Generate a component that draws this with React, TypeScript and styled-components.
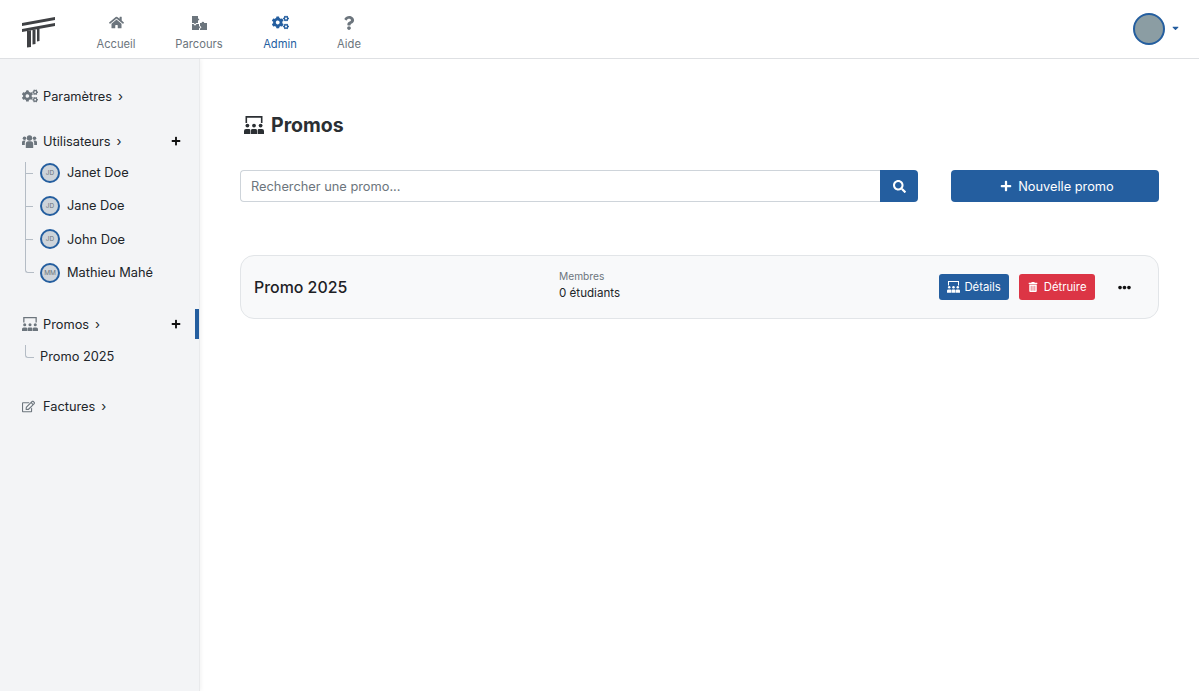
import React, { FC } from 'react';
import styled, { createGlobalStyle } from 'styled-components';
import {
  FaCaretDown,
  FaCogs,
  FaEllipsisH,
  FaHome,
  FaPlus,
  FaQuestion,
  FaRegEdit,
  FaSearch,
  FaTrashAlt,
} from 'react-icons/fa';

const BLUE = '#245e9f';
const GREY = '#6c757d';
const DARK = '#212529';
const LINE = '#b4bcc5';

const GlobalStyle = createGlobalStyle`
  html, body { margin: 0; padding: 0; height: 100%; background: #fff; }
  body { font-family: Inter, "Liberation Sans", sans-serif; color: ${DARK}; overflow: hidden; }
  * { box-sizing: border-box; }
`;

const Page = styled.div`
  display: flex;
  flex-direction: column;
  height: 691px;
`;

const Header = styled.header`
  height: 59px;
  flex: none;
  display: flex;
  align-items: flex-start;
  border-bottom: 1px solid #dee0e3;
  background: #fff;
  position: relative;
  z-index: 2;
`;

const LogoWrap = styled.div`
  width: 76px;
  padding: 17px 0 0 22px;
  flex: none;
  svg { display: block; }
`;

const Nav = styled.nav`
  display: flex;
`;

const NavIcon = styled.span`
  height: 15px;
  margin-bottom: 6px;
  display: flex;
  align-items: center;
  justify-content: center;
`;

const NavItem = styled.a<{ $active?: boolean; $width: number }>`
  width: ${(p) => p.$width}px;
  display: flex;
  flex-direction: column;
  align-items: center;
  padding-top: 15px;
  font-size: 11.2px;
  line-height: 16px;
  color: ${(p) => (p.$active ? BLUE : GREY)};
`;

const UserMenu = styled.div`
  margin-left: auto;
  display: flex;
  align-items: center;
  padding: 13px 19px 0 0;
  color: ${BLUE};
  svg { margin-left: 6px; width: 9px; height: 10px; margin-top: -3px; }
`;

const UserPhoto = styled.div`
  width: 32px;
  height: 32px;
  border-radius: 50%;
  background: #8b9da3;
  border: 2px solid ${BLUE};
`;

const Body = styled.div`
  flex: 1;
  display: flex;
  min-height: 0;
`;

const Sidebar = styled.aside`
  width: 200px;
  flex: none;
  background: #f3f4f6;
  border-right: 1px solid #e9eaec;
  box-shadow: 1px 0 4px rgba(0, 0, 0, 0.06);
  padding-top: 25px;
`;

const Section = styled.section<{ $gap: number }>`
  margin-bottom: ${(p) => p.$gap}px;
`;

const SectionTitle = styled.div<{ $active?: boolean }>`
  position: relative;
  height: 24px;
  display: flex;
  align-items: center;
  padding: 0 18px 0 22px;
  font-size: 12.8px;
  color: ${DARK};
  ${(p) =>
    p.$active &&
    `&::after {
      content: '';
      position: absolute;
      right: 0;
      top: -3px;
      width: 4px;
      height: 30px;
      background: ${BLUE};
    }`}
`;

const SectionIcon = styled.span`
  width: 21px;
  flex: none;
  display: flex;
  align-items: center;
  color: ${GREY};
  svg { display: block; }
`;

const Chevron = styled.span`
  margin-left: 6px;
  font-size: 13px;
`;

const AddButton = styled.span`
  margin-left: auto;
  display: flex;
  color: #111;
  svg { width: 10px; height: 10px; }
`;

const Tree = styled.ul<{ $offset: number }>`
  list-style: none;
  margin: ${(p) => p.$offset}px 0 0;
  padding: 0 0 0 40px;
`;

const Leaf = styled.li<{ $first?: boolean; $last?: boolean }>`
  position: relative;
  height: 33.3px;
  display: flex;
  align-items: center;
  gap: 7px;
  font-size: 12.8px;
  &::before {
    content: '';
    position: absolute;
    left: -15px;
    top: ${(p) => (p.$first ? '6px' : '0')};
    bottom: ${(p) => (p.$last ? '50%' : '0')};
    width: 8px;
    border-left: 1.5px solid ${LINE};
    ${(p) =>
      p.$last &&
      `border-bottom: 1.5px solid ${LINE};
       border-bottom-left-radius: 3px;`}
  }
  &::after {
    content: '';
    position: absolute;
    left: -15px;
    top: 50%;
    width: 8px;
    border-bottom: 1.5px solid ${(p) => (p.$last ? 'transparent' : LINE)};
  }
`;

const PromoLeaf = styled.li`
  position: relative;
  height: 29px;
  display: flex;
  align-items: center;
  font-size: 12.8px;
  &::before {
    content: '';
    position: absolute;
    left: -15px;
    top: 3px;
    width: 8px;
    height: 12px;
    border-left: 1.5px solid ${LINE};
    border-bottom: 1.5px solid ${LINE};
    border-bottom-left-radius: 3px;
  }
`;

const Avatar = styled.span`
  width: 20px;
  height: 20px;
  flex: none;
  border-radius: 50%;
  border: 2px solid ${BLUE};
  background: #ced4da;
  color: ${GREY};
  font-size: 6.5px;
  display: flex;
  align-items: center;
  justify-content: center;
`;

const Main = styled.main`
  flex: 1;
  padding: 53px 40px 0 40px;
`;

const Title = styled.h1`
  margin: 0 0 33px 4px;
  height: 25px;
  display: flex;
  align-items: center;
  gap: 7px;
  font-size: 19.5px;
  font-weight: 700;
  color: #2b2f33;
`;

const Toolbar = styled.div`
  display: flex;
  align-items: stretch;
  height: 32px;
  margin-bottom: 53px;
`;

const SearchGroup = styled.div`
  width: 678px;
  display: flex;
`;

const SearchInput = styled.input`
  flex: 1;
  min-width: 0;
  border: 1px solid #ced4da;
  border-right: none;
  border-radius: 4px 0 0 4px;
  padding: 0 10px;
  font: 12.8px Inter, "Liberation Sans", sans-serif;
  outline: none;
  &::placeholder { color: ${GREY}; opacity: 1; }
`;

const SearchButton = styled.button`
  width: 38px;
  border: none;
  background: ${BLUE};
  color: #fff;
  border-radius: 0 4px 4px 0;
  display: flex;
  align-items: center;
  justify-content: center;
  svg { width: 13px; height: 13px; }
`;

const NewButton = styled.button`
  margin-left: auto;
  width: 208px;
  padding: 0 0 0 4px;
  border: none;
  border-radius: 4px;
  background: ${BLUE};
  color: #fff;
  font: 12.8px Inter, "Liberation Sans", sans-serif;
  display: flex;
  align-items: center;
  justify-content: center;
  gap: 6px;
  svg { width: 12px; height: 12px; }
`;

const Card = styled.article`
  height: 64px;
  display: flex;
  align-items: center;
  border: 1px solid #e2e5e8;
  border-radius: 14px;
  background: #f8f9fa;
  padding: 0 27px 0 13px;
`;

const CardName = styled.div`
  width: 305px;
  font-size: 15.9px;
  font-weight: 500;
  color: #1d2125;
`;

const Stat = styled.div`
  margin-top: -5px;
  font-size: 11.6px;
  line-height: 16px;
`;

const StatLabel = styled.div`
  margin-bottom: 1px;
  font-size: 10.2px;
  color: ${GREY};
`;

const CardActions = styled.div`
  margin-left: auto;
  display: flex;
  align-items: center;
`;

const ActionButton = styled.button<{ $danger?: boolean; $gap: number }>`
  height: 26px;
  padding: 0 8.5px;
  border: none;
  border-radius: 3px;
  margin-right: 10px;
  background: ${(p) => (p.$danger ? '#dc3545' : BLUE)};
  color: #fff;
  font: 11.3px Inter, "Liberation Sans", sans-serif;
  display: flex;
  align-items: center;
  gap: ${(p) => p.$gap}px;
`;

const MoreButton = styled.span`
  display: flex;
  margin-left: 13px;
  color: #111;
  svg { width: 13px; height: 13px; }
`;

const Logo: FC = () => (
  <svg width="33" height="31" viewBox="0 0 33 31">
    <g fill="#3f4144">
      <polygon points="0,6 33,0 33,3 0,9" />
      <polygon points="0,12 33,6 33,9 0,15" />
      <polygon points="5,14 9,13.3 9,30 5,30.6" />
      <polygon points="10.5,13 13.5,12.4 13.5,27 10.5,27.5" />
      <polygon points="15,12 17.5,11.5 17.5,24 15,24.4" />
    </g>
  </svg>
);

const PromoIcon: FC<{ size: number }> = ({ size }) => (
  <svg width={size} height={size * 0.9} viewBox="0 0 20 18" fill="currentColor">
    <path d="M1.5 0h17v7h-1.6V1.7H3.1V7H1.5z" />
    <circle cx="3.4" cy="9.6" r="1.9" />
    <circle cx="10" cy="9.6" r="1.9" />
    <circle cx="16.6" cy="9.6" r="1.9" />
    <path d="M0 18v-3a2 2 0 0 1 2-2h3a1.4 1.4 0 0 1 1.4 1.4V18zM7 18v-3.6A1.4 1.4 0 0 1 8.400 13h3.2a1.4 1.4 0 0 1 1.4 1.4V18zM13.600 18v-3.600A1.4 1.4 0 0 1 15 13h3a2 2 0 0 1 2 2v3z" />
  </svg>
);

const ParcoursIcon: FC = () => (
  <svg width="15" height="14" viewBox="0 0 15 14" fill="currentColor">
    <path d="M0 0h6v2.2L7.400 3.500 6 4.800V7H4.200L3 8.300 1.800 7H0z" />
    <path d="M0 8h1.400L3 9.700 4.600 8H7v2l1.300 1.200L7 12.400V14H0z" />
    <path d="M8 7h1.600a1.300 1.300 0 1 1 2.600 0H15v7H8v-1.300l1.500-1.500L8 9.700z" />
  </svg>
);

const UsersIcon: FC = () => (
  <svg width="15" height="13" viewBox="0 0 15 13" fill="currentColor">
    <circle cx="7.500" cy="3" r="2.700" />
    <circle cx="2.500" cy="3.200" r="1.800" />
    <circle cx="12.500" cy="3.200" r="1.800" />
    <path d="M3.800 13V8.800A2.500 2.500 0 0 1 6.300 6.300h2.400a2.500 2.500 0 0 1 2.500 2.500V13z" />
    <path d="M0 10V7.300A1.800 1.800 0 0 1 1.800 5.500h1.900A3.500 3.500 0 0 0 2.800 8v2zM15 10V7.300a1.800 1.800 0 0 0-1.800-1.800h-1.900a3.500 3.500 0 0 1 .9 2.500v2z" />
  </svg>
);

const users = [
  { name: 'Janet Doe', initials: 'JD' },
  { name: 'Jane Doe', initials: 'JD' },
  { name: 'John Doe', initials: 'JD' },
  { name: 'Mathieu Mahé', initials: 'MM' },
];

const App: FC = () => (
  <Page>
    <GlobalStyle />
    <Header>
      <LogoWrap>
        <Logo />
      </LogoWrap>
      <Nav>
        <NavItem $width={80}>
          <NavIcon>
            <FaHome size={15} />
          </NavIcon>
          Accueil
        </NavItem>
        <NavItem $width={86}>
          <NavIcon>
            <ParcoursIcon />
          </NavIcon>
          Parcours
        </NavItem>
        <NavItem $width={76} $active>
          <NavIcon>
            <FaCogs size={17} />
          </NavIcon>
          Admin
        </NavItem>
        <NavItem $width={62}>
          <NavIcon>
            <FaQuestion size={14} />
          </NavIcon>
          Aide
        </NavItem>
      </Nav>
      <UserMenu>
        <UserPhoto />
        <FaCaretDown />
      </UserMenu>
    </Header>
    <Body>
      <Sidebar>
        <Section $gap={21}>
          <SectionTitle>
            <SectionIcon>
              <FaCogs size={16} />
            </SectionIcon>
            Paramètres
            <Chevron>›</Chevron>
          </SectionTitle>
        </Section>
        <Section $gap={23}>
          <SectionTitle>
            <SectionIcon>
              <UsersIcon />
            </SectionIcon>
            Utilisateurs
            <Chevron>›</Chevron>
            <AddButton>
              <FaPlus />
            </AddButton>
          </SectionTitle>
          <Tree $offset={3}>
            {users.map((user, index) => (
              <Leaf
                key={user.name}
                $first={index === 0}
                $last={index === users.length - 1}
              >
                <Avatar>{user.initials}</Avatar>
                {user.name}
              </Leaf>
            ))}
          </Tree>
        </Section>
        <Section $gap={23}>
          <SectionTitle $active>
            <SectionIcon>
              <PromoIcon size={16} />
            </SectionIcon>
            Promos
            <Chevron>›</Chevron>
            <AddButton>
              <FaPlus />
            </AddButton>
          </SectionTitle>
          <Tree $offset={6}>
            <PromoLeaf>Promo 2025</PromoLeaf>
          </Tree>
        </Section>
        <Section $gap={0}>
          <SectionTitle>
            <SectionIcon>
              <FaRegEdit size={13} />
            </SectionIcon>
            Factures
            <Chevron>›</Chevron>
          </SectionTitle>
        </Section>
      </Sidebar>
      <Main>
        <Title>
          <PromoIcon size={20} />
          Promos
        </Title>
        <Toolbar>
          <SearchGroup>
            <SearchInput placeholder="Rechercher une promo..." />
            <SearchButton>
              <FaSearch />
            </SearchButton>
          </SearchGroup>
          <NewButton>
            <FaPlus />
            Nouvelle promo
          </NewButton>
        </Toolbar>
        <Card>
          <CardName>Promo 2025</CardName>
          <Stat>
            <StatLabel>Membres</StatLabel>0 étudiants
          </Stat>
          <CardActions>
            <ActionButton $gap={4}>
              <PromoIcon size={13} />
              Détails
            </ActionButton>
            <ActionButton $danger $gap={6}>
              <FaTrashAlt size={10} />
              Détruire
            </ActionButton>
            <MoreButton>
              <FaEllipsisH />
            </MoreButton>
          </CardActions>
        </Card>
      </Main>
    </Body>
  </Page>
);

export default App;
